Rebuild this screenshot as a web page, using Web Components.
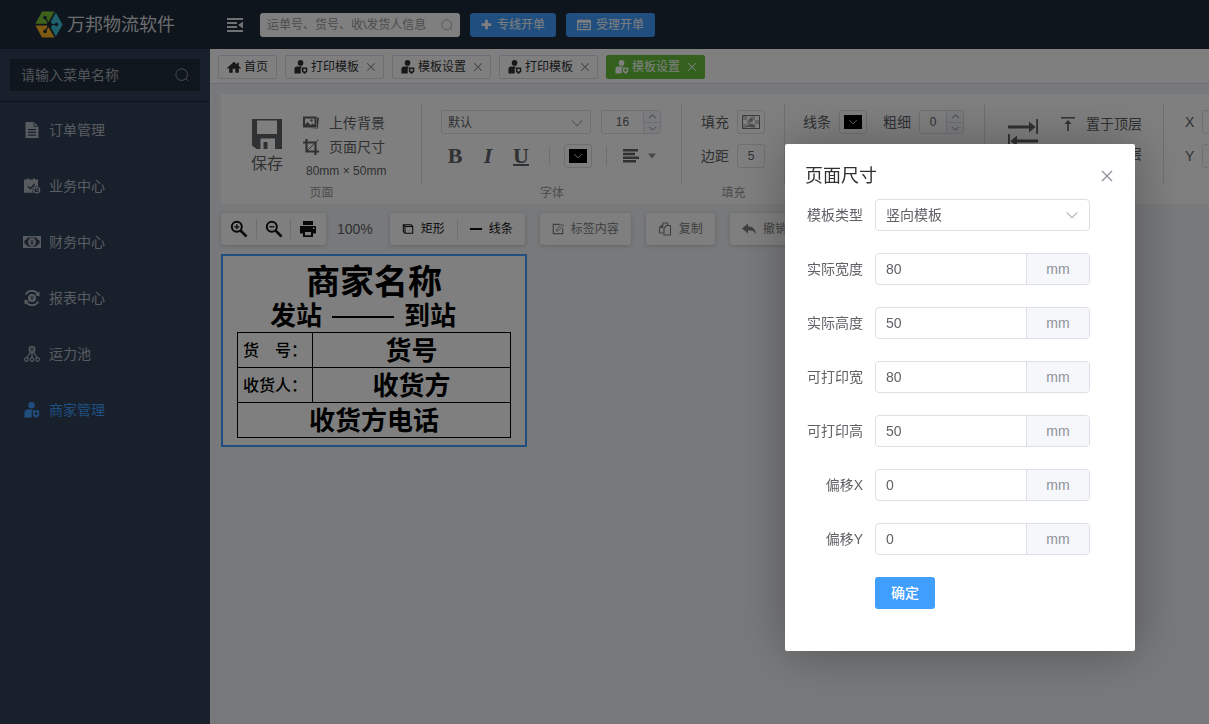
<!DOCTYPE html>
<html lang="zh-CN">
<head>
<meta charset="utf-8">
<meta name="viewport" content="width=device-width, initial-scale=1">
<title>万邦物流软件 - 模板设置</title>
<style>
  body { margin: 0; font: 14px/20px "Liberation Sans", "Noto Sans CJK SC", sans-serif; color: #303133; background: #f0f2f5; }
</style>
</head>
<body>
<app-shell></app-shell>
<page-size-dialog></page-size-dialog>

<script>
const RESET = `
  :host, *, *::before, *::after { box-sizing: border-box; }
  button, input, select { font: inherit; color: inherit; margin: 0; padding: 0; border: 0; background: none; outline: none; border-radius: 0; min-width: 0; }
  button { cursor: pointer; white-space: nowrap; }
  a { color: inherit; text-decoration: none; }
  :host([hidden]) { display: none; }
`;

function define(name, html, setup) {
  const template = document.createElement('template');
  template.innerHTML = html;
  customElements.define(name, class extends HTMLElement {
    constructor() {
      super();
      this.attachShadow({ mode: 'open' }).append(template.content.cloneNode(true));
    }
    connectedCallback() {
      if (setup) setup(this, this.shadowRoot);
    }
  });
}

const S = 'fill="none" stroke="currentColor"';
const ICONS = {
  logo: ['0 0 28 27', `<path fill="#7cc236" d="M.5 12.8 7 .5h12.5l-7 12.3z"/><path fill="#ffb424" d="M.5 14.4 7 26.5h12.5l-7-12.1z"/><path fill="#3cc0d8" d="M20.8 1.6 27.6 13.5l-6.8 12-6.4-12z"/><g fill="#1d2b3a"><circle cx="10" cy="6.6" r="1.8"/><circle cx="21.5" cy="13.5" r="1.8"/><circle cx="10" cy="20.4" r="1.8"/><circle cx="14.6" cy="13.5" r="2.6"/></g><path fill="none" stroke="#1d2b3a" stroke-width="1.2" d="m10 6.600 4.500 7-4.500 7M14.500 13.500h7"/>`],
  search: ['0 0 16 16', `<circle cx="7.600" cy="7.600" r="6.600" ${S}/><path d="m12.300 12.300 2.700 2.700" ${S}/>`],
  fold: ['0 0 16 16', `<path fill="currentColor" d="M0 1h16v2H0zM0 5h10v2H0zM0 9h10v2H0zM0 13h16v2H0zM16 4.500v7L11 8z"/>`],
  doc: ['0 0 16 16', `<path fill="currentColor" fill-rule="evenodd" d="M1.500 0H10l4.500 4.500V16h-13zM4 7v1.300h8V7zm0 2.800v1.300h8V9.800zm0 2.700v1.300h8v-1.300z"/><path d="M10 .5v4h4" fill="none" stroke="#304156" stroke-width=".8"/>`],
  task: ['0 0 16 16', `<path fill="currentColor" d="M0 1.500h3V.5h2v1h4v-1h2v1h3V8a4.500 4.500 0 0 0-5 6.800H0z"/><path d="m4 8.200 2.500 2.500L10.500 6" fill="none" stroke="#304156" stroke-width="1.300"/><circle cx="12.700" cy="12" r="2.900" ${S} stroke-width="1.400"/><path d="M12.600 10.200v2h2" ${S}/>`],
  money: ['0 0 18 16', `<path fill="currentColor" fill-rule="evenodd" d="M0 2h18v12H0zm4.500 1.500A3 3 0 0 1 1.500 6v4a3 3 0 0 1 3 2.500h9a3 3 0 0 1 3-2.500V6a3 3 0 0 1-3-2.500z"/><ellipse cx="9" cy="8" rx="3.800" ry="4" fill="currentColor"/><path d="m7.300 5.500 1.700 2 1.700-2M9 7.500v3.300M7.500 8.200h3M7.500 9.600h3" stroke="#304156" stroke-width=".8" fill="none"/>`],
  report: ['0 0 16 16', `<path d="M1.800 4.500A7 7 0 0 1 14 4.200M14.200 11.500A7 7 0 0 1 2 11.800" ${S} stroke-width="1.800"/><path fill="currentColor" d="M15.500 1.500v5l-4.500-1.500zM.5 14.500v-5L5 11z"/><circle cx="8" cy="8" r="4" fill="currentColor"/><path d="m6.500 5.800 1.500 1.800 1.500-1.800M8 7.600v2.800M6.500 8.200h3" stroke="#304156" stroke-width=".8" fill="none"/>`],
  fleet: ['0 0 16 16', `<circle cx="8" cy="3.500" r="2.700" ${S} stroke-width="1.500"/><circle cx="8" cy="3.500" r="1" fill="currentColor"/><path d="M8 6v6M6.500 6 3 11.500M9.500 6 13 11.500" ${S} stroke-width="1.200"/><circle cx="2.500" cy="13.500" r="1.800" ${S} stroke-width="1.200"/><circle cx="8" cy="13.500" r="1.800" ${S} stroke-width="1.200"/><circle cx="13.500" cy="13.500" r="1.800" ${S} stroke-width="1.200"/>`],
  merchant: ['0 0 16 16', `<circle cx="7.500" cy="3.300" r="3.200" fill="currentColor"/><path fill="currentColor" d="M.5 15.500V10.500a3 3 0 0 1 3-3h5V9.500H7.700v6z"/><path fill="currentColor" fill-rule="evenodd" d="M9 8.600h6.200v4.900L12.100 16 9 13.500zm3.100 1.500a1.500 1.500 0 1 0 0 3 1.500 1.500 0 0 0 0-3z"/>`],
  home: ['0 0 16 16', `<path fill="currentColor" d="M8 2 0 9l1 1 1.500-1v5.500h4V10h3v4.500h4V9L15 10l1-1-2.500-2.200V3h-2v2z"/>`],
  close: ['0 0 16 16', `<path d="m3 3 10 10M13 3 3 13" ${S} stroke-width="1.400"/>`],
  plus: ['0 0 16 16', `<path fill="currentColor" d="M6 1h4v5h5v4h-5v5H6v-5H1V6h5z"/>`],
  list: ['0 0 16 16', `<path fill="currentColor" fill-rule="evenodd" d="M1 2h14a1 1 0 0 1 1 1v10a1 1 0 0 1-1 1H1a1 1 0 0 1-1-1V3a1 1 0 0 1 1-1zm.5 3.500v7h13v-7zM3 6.500h2V8H3zm3.500 0H13V8H6.500zM3 9.500h2V11H3zm3.500 0H13V11H6.500z"/>`],
  save: ['0 0 30 30', `<path fill="currentColor" fill-rule="evenodd" d="M0 0h30v30H4.500L0 26.500zM5 1.500v13.500h20V1.500zM8.500 19.500v10.500h3v-7h4v7h7.500v-10.500z"/>`],
  image: ['0 0 16 16', `<path fill="currentColor" fill-rule="evenodd" d="M0 1.500h13.500v11H0zM2 3.500v6l2.500-2.500 3 3 2-1.500 2 1.500V3.500zM8.500 4.200a1.200 1.200 0 1 1 0 2.400 1.200 1.200 0 0 1 0-2.400zM14 2.500l2 .3-1.300 10.900-9-.5H14z"/>`],
  crop: ['0 0 16 16', `<path d="M3.500 0v12.500H16M0 3.500h12.500V16" ${S} stroke-width="2.200"/><path d="M4 12 15.500.5" ${S}/>`],
  down: ['0 0 16 16', `<path d="m2 5 6 6 6-6" ${S} stroke-width="1.300"/>`],
  up: ['0 0 16 16', `<path d="m2 11 6-6 6 6" ${S} stroke-width="1.600"/>`],
  align: ['0 0 16 16', `<path fill="currentColor" d="M0 1h15v2.500H0zM0 4.700h12v2.500H0zM0 8.400h16v2.500H0zM0 12h13v2.500H0z"/>`],
  caret: ['0 0 10 10', `<path fill="currentColor" d="M1 2.500h8L5 7.500z"/>`],
  swatch: ['0 0 18 14', `<path fill="#fff" stroke="#777" d="M.5.5h17v13H.5z"/><path fill="#ccc" d="M1 1h4v4H1zM9 1h4v4H9zM5 5h4v4H5zM13 5h4v4h-4zM1 9h4v4H1zM9 9h4v4H9z"/><circle cx="9" cy="5" r="2" fill="#999"/><path fill="#999" d="m4 12 3-3h4l3 3z"/>`],
  swap: ['0 0 30 30', `<path fill="currentColor" d="M0 7.500h21v-4L27.500 9 21 14.500v-4H0zM28.200 1H30v15h-1.800zM0 16h1.800v14H0zM2.500 23 9 17.500v4h21v3H9v4z"/>`],
  top: ['0 0 14 14', `<path fill="currentColor" d="M0 0h14v1.500H0zM7 3l3.500 4H7.800v7H6.200V7H3.500z"/>`],
  bottom: ['0 0 14 14', `<path fill="currentColor" d="M0 14h14v-1.500H0zM7 11l3.500-4H7.800V0H6.200v7H3.500z"/>`],
  zoomin: ['0 0 18 18', `<circle cx="6.800" cy="6.800" r="5" ${S} stroke-width="2"/><path d="m10.500 10.500 6 6" ${S} stroke-width="2.500"/><path d="M4.300 6.800h5M6.800 4.300v5" ${S} stroke-width="1.300"/>`],
  zoomout: ['0 0 18 18', `<circle cx="6.800" cy="6.800" r="5" ${S} stroke-width="2"/><path d="m10.500 10.500 6 6" ${S} stroke-width="2.500"/><path d="M4.300 6.800h5" ${S} stroke-width="1.300"/>`],
  print: ['0 0 18 18', `<path fill="currentColor" fill-rule="evenodd" d="M4 1h10v4H4zM1 6h16v7.500h-3V17H4v-3.500H1zm5 6v3.200h6V12zM14 7.500V9h1.500V7.500z"/>`],
  rect: ['0 0 14 14', `<path d="M3.500 4h9v8h-9l-2-2V2h9l2 2M1.500 2l2 2v8" ${S} stroke-width="1.200"/>`],
  line: ['0 0 12 12', `<path d="M0 6h12" ${S} stroke-width="2"/>`],
  edit: ['0 0 14 14', `<path d="M9 1.500H1.500v11h11V6" ${S} stroke-width="1.400"/><path d="m5 9.500.5-2.300L11.800 1l1.600 1.500L7.200 9z" ${S}/>`],
  copy: ['0 0 14 14', `<path d="M5 4V1h4.500v2.500M1.500 5.500l3-2.500M1.500 5.500V11H6M6 6l2.500-2.500h4V13H6zM1.500 5.500H4.500V3" ${S} stroke-width="1.100"/>`],
  undo: ['0 0 14 14', `<path fill="currentColor" d="M0 6.500 6 1.500v3c5 0 7.500 2.500 8 7.500-1.800-2.800-4-3.700-8-3.700v3.200z"/>`]
};

define('ui-icon', `<style>
  :host { display: inline-flex; flex: none; width: 16px; height: 16px; }
  svg { width: 100%; height: 100%; display: block; }
</style><svg aria-hidden="true"></svg>`, (el, root) => {
  const [box, body] = ICONS[el.getAttribute('name')];
  const svg = root.querySelector('svg');
  svg.setAttribute('viewBox', box);
  svg.innerHTML = body;
});

/* Search box with a trailing magnifier */
define('search-box', `<style>${RESET}
  :host { display: flex; align-items: center; }
  input { flex: 1; height: 100%; }
  input::placeholder { color: var(--hint, #999); opacity: 1; }
  ui-icon { width: var(--lens, 12px); height: var(--lens, 12px); color: var(--hint, #999); }
</style><input type="text"><ui-icon name="search"></ui-icon>`, (el, root) => {
  const input = root.querySelector('input');
  input.placeholder = el.getAttribute('hint');
  input.setAttribute('aria-label', el.getAttribute('hint'));
});

define('top-bar', `<style>${RESET}
  :host { display: flex; align-items: center; height: 49px; background: #1d2b3a; color: #fff; }
  .brand { width: 210px; flex: none; padding-left: 35px; display: flex; align-items: center; gap: 4px; font-size: 18px; line-height: 24px; color: #d8dade; }
  .brand ui-icon { width: 28px; height: 27px; }
  .fold { display: flex; margin: 0 17px; color: #dfe2e6; }
  search-box { width: 200px; height: 24px; padding: 0 7px; background: #fff; border-radius: 3px; font-size: 12px; }
  .open { height: 24px; margin-left: 10px; padding: 0 11px; background: #409eff; border-radius: 3px; display: flex; align-items: center; gap: 5px; font-size: 12px; line-height: 24px; }
  .open ui-icon { width: 11px; height: 11px; }
  .open .wide { width: 14px; height: 14px; }
</style>
<a class="brand" href="#"><ui-icon name="logo"></ui-icon>万邦物流软件</a>
<button class="fold" aria-label="收起菜单"><ui-icon name="fold"></ui-icon></button>
<search-box hint="运单号、货号、收\\发货人信息"></search-box>
<button class="open"><ui-icon name="plus"></ui-icon>专线开单</button>
<button class="open"><ui-icon class="wide" name="list"></ui-icon>受理开单</button>`);

define('menu-item', `<style>${RESET}
  :host { display: block; color: #b0b7c1; }
  :host([active]) { color: #409eff; }
  a { display: flex; align-items: center; gap: 8px; height: 56px; padding-left: 23px; }
  ui-icon { width: 18px; height: 16px; }
</style><a href="#"><span></span><slot></slot></a>`, (el, root) => {
  const icon = document.createElement('ui-icon');
  icon.setAttribute('name', el.getAttribute('icon'));
  root.querySelector('span').replaceWith(icon);
});

define('side-menu', `<style>${RESET}
  :host { display: block; width: 210px; flex: none; background: #304156; }
  .find { padding: 10px; border-bottom: 1px solid #1c2838; height: 53px; }
  search-box { height: 32px; padding: 0 11px; background: #1f2d3d; --hint: #a3a9b1; --lens: 14px; }
</style>
<div class="find"><search-box hint="请输入菜单名称"></search-box></div>
<nav>
  <menu-item icon="doc">订单管理</menu-item>
  <menu-item icon="task">业务中心</menu-item>
  <menu-item icon="money">财务中心</menu-item>
  <menu-item icon="report">报表中心</menu-item>
  <menu-item icon="fleet">运力池</menu-item>
  <menu-item icon="merchant" active>商家管理</menu-item>
</nav>`);

define('page-tab', `<style>${RESET}
  :host { display: flex; align-items: center; height: 24px; padding: 0 6px 0 8px; border: 1px solid #d8dce5; border-radius: 2px; background: #fff; color: #303133; font-size: 12px; line-height: 22px; }
  :host([fixed]) { padding-right: 8px; }
  :host([active]) { background: #67c23a; border-color: #67c23a; color: #fff; }
  a { display: flex; align-items: center; gap: 3px; }
  a ui-icon { width: 14px; height: 14px; }
  button { display: flex; margin-left: 6px; color: #808488; }
  :host([active]) button { color: #fff; }
  button ui-icon { width: 12px; height: 12px; }
</style><a href="#"><span></span><slot></slot></a><button aria-label="关闭标签"><ui-icon name="close"></ui-icon></button>`, (el, root) => {
  const icon = document.createElement('ui-icon');
  icon.setAttribute('name', el.getAttribute('icon'));
  root.querySelector('span').replaceWith(icon);
  if (el.hasAttribute('fixed')) root.querySelector('button').remove();
});

define('tab-strip', `<style>${RESET}
  :host { display: flex; gap: 8px; height: 35px; padding: 6px 8px 0; background: #fff; border-bottom: 1px solid #d8dce5; }
</style>
<page-tab icon="home" fixed>首页</page-tab>
<page-tab icon="merchant">打印模板</page-tab>
<page-tab icon="merchant">模板设置</page-tab>
<page-tab icon="merchant">打印模板</page-tab>
<page-tab icon="merchant" active>模板设置</page-tab>`);

/* Titled block of ribbon controls, closed by a vertical rule */
define('ribbon-group', `<style>${RESET}
  :host { display: block; flex: none; padding-top: 10px; }
  .body { height: 80px; border-right: 1px solid #dcdfe6; display: flex; }
  .name { text-align: center; font-size: 12px; line-height: 18px; color: #999; }
</style><div class="body"><slot></slot></div><div class="name"></div>`, (el, root) => {
  root.querySelector('.name').textContent = el.getAttribute('name');
});

define('number-field', `<style>${RESET}
  :host { display: flex; height: 24px; border: 1px solid #dcdfe6; border-radius: 3px; font-size: 12px; color: #606266; overflow: hidden; }
  input { flex: 1; text-align: center; }
  .steps { flex: none; width: 17px; display: grid; grid-template-rows: 1fr 1fr; background: #f5f7fa; border-left: 1px solid #dcdfe6; }
  .steps button { display: grid; place-items: center; }
  .steps button + button { border-top: 1px solid #dcdfe6; }
  ui-icon { width: 9px; height: 9px; }
</style><input type="text"><div class="steps"><button aria-label="增加"><ui-icon name="up"></ui-icon></button><button aria-label="减少"><ui-icon name="down"></ui-icon></button></div>`, (el, root) => {
  const input = root.querySelector('input');
  input.value = el.getAttribute('value');
  input.setAttribute('aria-label', el.getAttribute('label'));
  if (el.hasAttribute('plain')) root.querySelector('.steps').remove();
});

define('drop-down', `<style>${RESET}
  :host { display: grid; align-items: center; border: 1px solid #dcdfe6; border-radius: 4px; background: #fff; color: #606266; }
  select { grid-area: 1 / 1; appearance: none; width: 100%; height: 100%; padding: 0 10px; }
  :host([small]) select { padding: 0 6px; }
  ui-icon { grid-area: 1 / 1; justify-self: end; margin-right: 10px; width: 14px; height: 14px; color: #b0b4bb; pointer-events: none; }
  :host([small]) ui-icon { margin-right: 6px; }
</style><select><option></option></select><ui-icon name="down"></ui-icon>`, (el, root) => {
  root.querySelector('option').textContent = el.getAttribute('value');
  root.querySelector('select').setAttribute('aria-label', el.getAttribute('label'));
});

define('color-pick', `<style>${RESET}
  :host { display: block; width: 28px; height: 24px; }
  button { width: 100%; height: 100%; display: grid; place-items: center; border: 1px solid #dcdfe6; border-radius: 3px; }
  .ink { width: 18px; height: 14px; display: grid; place-items: center; background: #000; color: #fff; }
  .ink ui-icon { width: 10px; height: 10px; }
  .none { width: 18px; height: 14px; }
</style><button aria-label="选择颜色"><span class="ink"><ui-icon name="down"></ui-icon></span><ui-icon class="none" name="swatch"></ui-icon></button>`, (el, root) => {
  root.querySelector(el.hasAttribute('empty') ? '.ink' : '.none').remove();
});

define('edit-ribbon', `<style>${RESET}
  :host { display: flex; min-width: max-content; height: 110px; background: #fff; color: #606266; }
  .stack { display: flex; flex-direction: column; gap: 10px; padding: 6px 19px 0; }
  .row { display: flex; align-items: center; height: 24px; gap: 8px; line-height: 24px; }
  .save { display: flex; flex-direction: column; align-items: center; align-self: flex-start; gap: 3px; margin: 15px 20px 0 30px; font-size: 16px; line-height: 24px; }
  .save ui-icon { width: 30px; height: 30px; }
  .acts { padding-top: 7px; }
  .acts button { display: flex; align-items: center; gap: 10px; height: 24px; }
  .size { font-size: 12px; line-height: 24px; padding-left: 3px; }
  .page { width: 201px; } .font { width: 260px; } .fill { width: 103px; } .edge { width: 200px; } .layer { width: 179px; } .place { width: 200px; }
  .font drop-down { width: 150px; height: 24px; margin-right: 2px; font-size: 12px; border-radius: 3px; }
  .font number-field { width: 60px; }
  .type { font: bold 22px/24px "Liberation Serif", serif; width: 28px; text-align: center; }
  .italic { font-style: italic; }
  .under { text-decoration: underline; text-decoration-thickness: 2px; }
  .styles { gap: 5px; }
  .rule { width: 1px; height: 20px; background: #dcdfe6; margin: 0 9px; }
  .align { display: flex; align-items: center; gap: 8px; margin-left: 2px; }
  .align .caret { width: 10px; height: 10px; color: #909399; }
  .thick { width: 45px; }
  .gap { margin-right: 8px; }
  .pad { width: 28px; }
  .pos { width: 80px; }
  .axis { width: 9px; }
  .edge .stack { padding-left: 18px; }
  .place .stack { padding-left: 21px; }
  .layer button { display: flex; align-items: center; gap: 11px; height: 30px; }
  .layer button ui-icon { width: 14px; height: 14px; }
  .order { padding-top: 5px; }
  .swap { width: 30px; height: 30px; margin: 14px 23px 0; }
</style>
<ribbon-group class="page" name="页面">
  <button class="save"><ui-icon name="save"></ui-icon>保存</button>
  <div class="acts">
    <button><ui-icon name="image"></ui-icon>上传背景</button>
    <button><ui-icon name="crop"></ui-icon>页面尺寸</button>
    <div class="size">80mm × 50mm</div>
  </div>
</ribbon-group>
<ribbon-group class="font" name="字体">
  <div class="stack">
    <div class="row"><drop-down small value="默认" label="字体"></drop-down><number-field value="16" label="字号"></number-field></div>
    <div class="row styles">
      <button class="type">B</button><button class="type italic">I</button><button class="type under">U</button>
      <span class="rule"></span><color-pick></color-pick><span class="rule"></span>
      <button class="align" aria-label="对齐方式"><ui-icon name="align"></ui-icon><ui-icon class="caret" name="caret"></ui-icon></button>
    </div>
  </div>
</ribbon-group>
<ribbon-group class="fill" name="填充">
  <div class="stack">
    <div class="row">填充<color-pick empty></color-pick></div>
    <div class="row">边距<number-field class="pad" plain value="5" label="边距"></number-field></div>
  </div>
</ribbon-group>
<ribbon-group class="edge" name="边框">
  <div class="stack">
    <div class="row">线条<color-pick class="gap"></color-pick>粗细<number-field class="thick" value="0" label="粗细"></number-field></div>
  </div>
</ribbon-group>
<ribbon-group class="layer" name="图层">
  <ui-icon class="swap" name="swap"></ui-icon>
  <div class="order">
    <button><ui-icon name="top"></ui-icon>置于顶层</button>
    <button><ui-icon name="bottom"></ui-icon>置于底层</button>
  </div>
</ribbon-group>
<ribbon-group class="place" name="">
  <div class="stack">
    <div class="row"><span class="axis">X</span><number-field class="pos" plain value="" label="X"></number-field></div>
    <div class="row"><span class="axis">Y</span><number-field class="pos" plain value="" label="Y"></number-field></div>
  </div>
</ribbon-group>`);

define('tool-bar', `<style>${RESET}
  :host { display: flex; align-items: center; gap: 15px; height: 32px; font-size: 12px; color: #111; }
  .set { flex: none; display: flex; align-items: center; height: 32px; background: #fff; border-radius: 3px; box-shadow: 0 1px 4px rgba(0, 0, 0, .18); }
  button { display: flex; align-items: center; justify-content: center; gap: 7px; height: 20px; padding: 0 12px; }
  button + button { border-left: 1px solid #dcdfe6; }
  .zoom { padding: 0 2px 0 1px; }
  .zoom button { width: 34px; padding: 0; }
  .zoom ui-icon { width: 18px; height: 18px; }
  .percent { font-size: 14px; color: #606266; margin: 0 2px 0 -4px; }
  .off { color: #808080; }
  ui-icon { width: 12px; height: 12px; }
  .big ui-icon { width: 14px; height: 14px; }
</style>
<div class="set zoom">
  <button aria-label="放大"><ui-icon name="zoomin"></ui-icon></button>
  <button aria-label="缩小"><ui-icon name="zoomout"></ui-icon></button>
  <button aria-label="打印"><ui-icon name="print"></ui-icon></button>
</div>
<span class="percent">100%</span>
<div class="set"><button><ui-icon name="rect"></ui-icon>矩形</button><button><ui-icon name="line"></ui-icon>线条</button></div>
<div class="set off"><button><ui-icon name="edit"></ui-icon>标签内容</button></div>
<div class="set off big"><button><ui-icon name="copy"></ui-icon>复制</button></div>
<div class="set off big"><button><ui-icon name="undo"></ui-icon>撤销</button></div>`);

define('label-sheet', `<style>${RESET}
  :host { display: block; width: 306px; padding: 7px 14px; border: 2px solid #409eff; background: #fff; color: #000; font-weight: bold; text-align: center; }
  .shop { font-size: 34px; line-height: 38px; }
  .route { display: flex; align-items: center; justify-content: center; gap: 10px; font-size: 26px; line-height: 31px; padding-right: 22px; }
  .route i { width: 62px; height: 2px; background: #000; }
  table { width: 100%; border-collapse: collapse; table-layout: fixed; }
  th, td { height: 35px; padding: 3px 0 0; border: 1px solid #000; font-size: 26px; line-height: 31px; font-weight: bold; }
  th { width: 75px; padding: 0 0 0 5px; font-size: 16px; font-weight: 500; text-align: left; white-space: nowrap; }
</style>
<div class="shop">商家名称</div>
<div class="route">发站<i></i>到站</div>
<table>
  <tr><th scope="row">货　号：</th><td>货号</td></tr>
  <tr><th scope="row">收货人：</th><td>收货方</td></tr>
  <tr><td colspan="2">收货方电话</td></tr>
</table>`);

define('app-shell', `<style>${RESET}
  :host { display: flex; flex-direction: column; min-height: 100vh; }
  .below { flex: 1; display: flex; }
  main { flex: 1; min-width: 0; overflow: hidden; display: flex; flex-direction: column; }
  .work { flex: 1; margin-left: 4px; padding: 10px 0 0 6px; border-left: 1px solid #e4e7ec; display: flex; flex-direction: column; gap: 9px; }
</style>
<top-bar></top-bar>
<div class="below">
  <side-menu></side-menu>
  <main>
    <tab-strip></tab-strip>
    <div class="work">
      <edit-ribbon></edit-ribbon>
      <tool-bar></tool-bar>
      <label-sheet></label-sheet>
    </div>
  </main>
</div>`);

/* Labelled text box with its unit appended */
define('unit-field', `<style>${RESET}
  :host { display: flex; align-items: center; height: 32px; }
  label { flex: none; width: 70px; padding-right: 12px; text-align: right; white-space: nowrap; }
  .box { flex: 1; height: 32px; display: flex; border: 1px solid #dcdfe6; border-radius: 4px; overflow: hidden; }
  input { flex: 1; padding: 0 10px; }
  .unit { width: 63px; border-left: 1px solid #dcdfe6; background: #f5f7fa; color: #909399; text-align: center; line-height: 30px; }
</style><label for="value"></label><div class="box"><input id="value" type="text"><span class="unit">mm</span></div>`, (el, root) => {
  root.querySelector('label').textContent = el.getAttribute('label');
  root.querySelector('input').value = el.getAttribute('value');
});

define('page-size-dialog', `<style>${RESET}
  :host { position: fixed; inset: 0; display: flex; justify-content: flex-end; align-items: flex-start; padding: 144px 74px 0 0; background: rgba(0, 0, 0, .5); }
  section { width: 350px; padding: 20px 20px 42px; background: #fff; border-radius: 2px; box-shadow: 1px 1px 50px rgba(0, 0, 0, .3); color: #606266; }
  header { display: flex; align-items: center; justify-content: space-between; height: 24px; margin-bottom: 11px; }
  h2 { margin: 0; font-size: 18px; line-height: 24px; font-weight: 400; color: #303133; }
  .close { display: flex; color: #909399; }
  form { display: flex; flex-direction: column; gap: 22px; padding-right: 25px; }
  .kind { display: flex; align-items: center; height: 32px; }
  .kind span { flex: none; width: 70px; padding-right: 12px; text-align: right; }
  .kind drop-down { flex: 1; height: 32px; }
  .ok { align-self: flex-start; width: 60px; height: 32px; margin-left: 70px; background: #409eff; color: #fff; border-radius: 3px; font-weight: 500; }
</style>
<section role="dialog" aria-label="页面尺寸">
  <header><h2>页面尺寸</h2><button class="close" aria-label="关闭"><ui-icon name="close"></ui-icon></button></header>
  <form>
    <div class="kind"><span>模板类型</span><drop-down value="竖向模板" label="模板类型"></drop-down></div>
    <unit-field label="实际宽度" value="80"></unit-field>
    <unit-field label="实际高度" value="50"></unit-field>
    <unit-field label="可打印宽" value="80"></unit-field>
    <unit-field label="可打印高" value="50"></unit-field>
    <unit-field label="偏移X" value="0"></unit-field>
    <unit-field label="偏移Y" value="0"></unit-field>
    <button class="ok" type="button">确定</button>
  </form>
</section>`);
</script>
</body>
</html>
